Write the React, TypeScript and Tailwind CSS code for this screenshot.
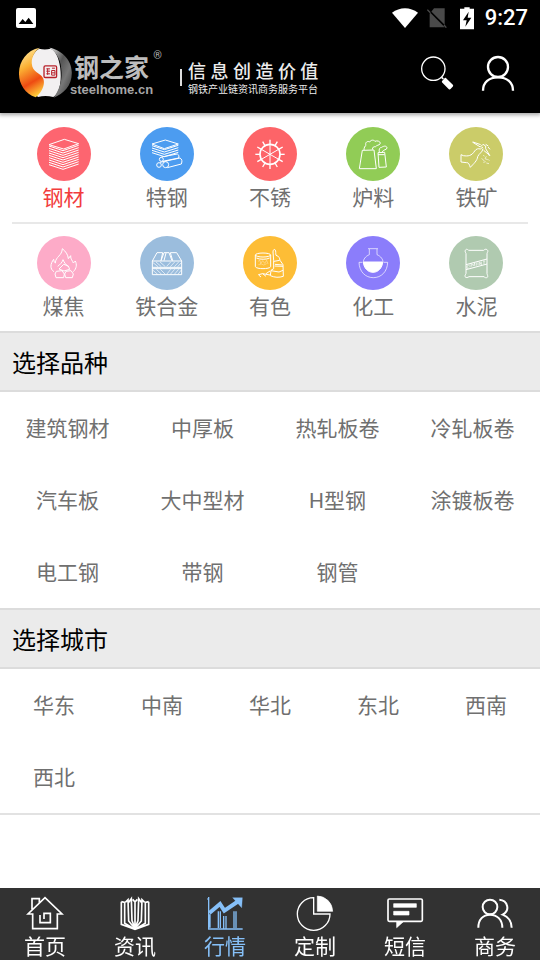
import type { ReactNode } from "react";
import { useState } from "react";

const LAYERS_TALL = [0, 7, 14, 21, 28, 35, 42, 49, 56];
const LAYERS_SHORT = [0, 7, 14, 21];
const SPOKES = [0, 30, 60, 90, 120, 150, 180, 210, 240, 270, 300, 330];

type Category = { name: string; color: string; art: ReactNode };

const categories: Category[] = [
  {
    name: "钢材",
    color: "bg-[#fd6570]",
    art: (
      <>
        <path d="M36 53 82 37l43 13-45 16Z" />
        {LAYERS_TALL.map((y) => (
          <path key={y} d={`M36 ${y + 57}l42 14 47-16`} />
        ))}
      </>
    ),
  },
  {
    name: "特钢",
    color: "bg-[#4c9cf0]",
    art: (
      <>
        <path d="M36 51 76 39l39 12-42 14Z" />
        {LAYERS_SHORT.map((y) => (
          <path key={y} d={`M36 ${y + 56}l37 12 42-13`} />
        ))}
        <path d="M64 90l48-9q8 4 4 12l-48 10M74 103l46-10q9 5 4 18l-42 11M60 106l14-3" />
        <circle cx="64" cy="97" r="6" />
        <circle cx="57" cy="114" r="7" />
        <circle cx="77" cy="113" r="9" />
      </>
    ),
  },
  {
    name: "不锈",
    color: "bg-[#fd6468]",
    art: (
      <>
        <circle cx="81" cy="82" r="30" strokeWidth="5" />
        {SPOKES.map((angle) => (
          <path key={angle} d="M81 52V38" strokeWidth="4" transform={`rotate(${angle} 81 82)`} />
        ))}
        <path d="M81 52v60M55 67l52 30M55 97l52-30" />
      </>
    ),
  },
  {
    name: "炉料",
    color: "bg-[#91cc56]",
    art: (
      <>
        <path d="M49 70 40 125h51l-7-56M49 70l35-1M96 77l3 44 22-1-5-44ZM96 83h20" />
        <path d="M54 69c0-8 3-12 6-14-4-9 5-14 11-10 4-8 14-6 16-2 8-4 19 2 15 8-3 4-10 3-13 8-7 0-9 1-10 9M100 75c-2-8 1-14 7-14 8-6 16-4 16 2-1 7-11 3-15 13" />
      </>
    ),
  },
  {
    name: "铁矿",
    color: "bg-[#cbcc69]",
    art: (
      <>
        <path d="M36 83l7 3c14 2 25 1 34-14 5-7 11-8 17-6l8-6M102 65c-2 12-12 14-16 24-1 12-13 22-22 32-4-9-4-15-12-14l-16-2V83" />
        <path d="M70 45l24 15 8-8 8 5v8l13 22M72 45l23 8M104 70l18 15M110 52l8 5M117 60l6 7" />
        <path d="M103 84l3 4M112 88l-4 7 8 3M117 97l4 4M98 94l8 8M103 106l7-2M112 108l8 2M119 79v6" strokeWidth="2" />
      </>
    ),
  },
  {
    name: "煤焦",
    color: "bg-[#fdabc8]",
    art: (
      <>
        <path d="M51 107C38 99 40 83 50 70c1 7 2 9 5 11 1-20 20-21 21-43 10 8 17 18 18 30l7-9c-1 11 6 15 8 22l6-6c5 11 4 22-6 32" />
        <path d="M62 91c7-5 14-12 16-20 4 10 10 16 15 20M66 99l14-14 14 5 4 10-17 5ZM58 106l17-2 7 10-2 11H57l-3-11ZM87 106l15-2 7 10-3 11H86l-3-11Z" />
      </>
    ),
  },
  {
    name: "铁合金",
    color: "bg-[#9bbddd]",
    art: (
      <>
        <path d="M37 75h88v41H37ZM37 94h88M37 98h88M37 75l14-25h17l-5 24M63 74l9-24h15l9 24M78 51l-6 23M91 50h19l15 25M91 50l7 24" />
        <path d="M38 79l16 13M48 78l16 14M60 78l16 14M80 91l12-13M91 92l13-14M103 92l13-14M113 92l11-12M38 102l15 13M49 100l16 15M61 100l15 15M80 115l12-15M91 115l13-15M103 115l13-15M114 115l10-13" strokeWidth="2" />
      </>
    ),
  },
  {
    name: "有色",
    color: "bg-[#fdbd36]",
    art: (
      <>
        <ellipse cx="60" cy="57" rx="23" ry="6" />
        <path d="M37 57v35c3 8 43 8 46 0V57M40 66c10 5 31 5 40 0" />
        <path d="M45 76l6-3 2 10 6-9 6 8 6-9 4 11M46 86l9-2 7 3 9-4" strokeWidth="1" />
        <path d="M92 73l-2-25c0-6 3-9 6-7 4 5 1 11 3 17 9 2 11 9 12 15l9 13 1 35c-13 4-25 4-39-2l2-16 8-5ZM93 76l17-3M96 85l23 2M95 90l25 1M84 104l24 4 12-5M46 116l13-3 22 4M59 113l10 8M47 117l7 6M69 113l12-8" />
      </>
    ),
  },
  {
    name: "化工",
    color: "bg-[#8b7dfb]",
    art: (
      <>
        <path d="M66 38h30M70 39v17c-12 5-18 14-18 23M93 39v17c12 5 18 14 18 23" strokeWidth="2" />
        <path d="M52 78h58c-1 17-13 31-29 31S53 95 52 78Z" fill="white" />
        <path d="M49 79H39c1 28 19 46 43 46s42-18 43-46h-12" strokeWidth="2" />
      </>
    ),
  },
  {
    name: "水泥",
    color: "bg-[#b0cab0]",
    art: (
      <>
        <path d="M49 43c3-6 8-2 10 0h45c4-4 9-5 12 0 2 5-2 6-2 10v60c1 5 4 7 1 11-4 3-8 0-10-2H60c-4 3-9 4-12 0-1-4 2-6 3-10V53c-1-4-4-6-2-10ZM51 86l63-17M51 101l63-17" />
        <path d="M59 88l-5 2v7l5-1M63 94v-9M68 92v-9l5 6 4-8v9M82 80v9M87 88v-9M92 87v-9l5 8v-9M102 75h7M105 75v9" strokeWidth="2" />
      </>
    ),
  },
];

const products = [
  "建筑钢材", "中厚板", "热轧板卷", "冷轧板卷",
  "汽车板", "大中型材", "H型钢", "涂镀板卷",
  "电工钢", "带钢", "钢管",
];

const cities = ["华东", "中南", "华北", "东北", "西南", "西北"];

const tabs: { name: string; art: ReactNode }[] = [
  {
    name: "首页",
    art: (
      <path d="M20 57H6L57 8l51 49H94v44H20ZM18 43V11h22v13M42 60v23h31V55H54v17" strokeWidth="5" />
    ),
  },
  {
    name: "资讯",
    art: (
      <>
        <path d="M16 20v68l41 15 41-15V20M16 20l10 2v63l31 18M98 20l-10 2v63l-31 18" strokeWidth="5" />
        <path d="M28 22l8-8 2 64 19 23M37 23l9-12 2 66 9 23M50 13l7 8v81M86 22l-8-8-2 64-19 23M77 23l-9-12-2 66-9 23M64 13l-7 8" strokeWidth="5" />
      </>
    ),
  },
  {
    name: "行情",
    art: (
      <>
        <path d="M8 6v96h102M4 12h6M12 58v40M37 49v50M43 49v50M53 63v37M60 63v37M84 49v50M90 49v50" strokeWidth="4" />
        <path d="M10 54l32-27 13 20 43-29" strokeWidth="12" />
        <path d="M80 8h29l-2 30Z" fill="currentColor" strokeWidth="1" />
      </>
    ),
  },
  {
    name: "定制",
    art: (
      <>
        <path d="M53 8a49 49 0 1 0 49 49H53Z" strokeWidth="4" />
        <path d="M64 3a47 47 0 0 1 46 46H64Z" fill="currentColor" strokeWidth="2" />
      </>
    ),
  },
  {
    name: "短信",
    art: (
      <>
        <rect x="6" y="12" width="103" height="67" rx="4" strokeWidth="5" />
        <path d="M32 80v18l20-18ZM23 26h68v11H23ZM23 49h46v11H23Z" fill="currentColor" strokeWidth="2" />
      </>
    ),
  },
  {
    name: "商务",
    art: (
      <>
        <circle cx="42" cy="36" r="22" strokeWidth="6" />
        <path d="M7 98c0-24 14-39 35-39s37 15 37 39M70 14c26 2 33 33 10 45 16 6 27 21 27 39" strokeWidth="6" />
      </>
    ),
  },
];

function StatusBar() {
  return (
    <div className="flex h-9 items-center pr-3 pl-4 text-white">
      <svg className="size-5" viewBox="0 0 60 60" aria-hidden="true">
        <rect width="60" height="60" rx="6" fill="white" />
        <path d="M8 48 20 33l8 9 10-13 14 19Z" fill="black" />
      </svg>
      <div className="ml-auto flex items-center">
        <svg className="h-5 w-7" viewBox="0 0 84 60" aria-hidden="true">
          <path d="M3 14C26-4 58-4 81 14L42 60Z" fill="white" />
        </svg>
        <svg className="ml-2 h-5 w-5" viewBox="0 0 60 60" aria-hidden="true">
          <path d="M21 1h32v57H8V17Z" fill="#4a4a4a" />
          <path d="M2 3l56 56" stroke="black" strokeWidth="5" />
          <path d="M1 5l9 9M51 51l7 8" stroke="#4a4a4a" strokeWidth="4" />
        </svg>
        <svg className="ml-3 h-6 w-4" viewBox="0 0 48 72" aria-hidden="true">
          <path d="M16 4h16v4h13v62H3V8h13Z" fill="white" />
          <path d="M29 17 12 43h11l-4 19 18-27H26Z" fill="black" />
        </svg>
        <span className="ml-2.5 text-[22px] leading-6 font-medium">9:27</span>
      </div>
    </div>
  );
}

function Emblem() {
  return (
    <svg className="h-[51px] w-[53px]" viewBox="0 0 159 154" aria-hidden="true">
      <defs>
        <linearGradient id="flame" x1="0.3" y1="0" x2="0.6" y2="1">
          <stop offset="0" stopColor="#ffe9a0" />
          <stop offset="0.35" stopColor="#fbb033" />
          <stop offset="0.7" stopColor="#ee4a12" />
          <stop offset="1" stopColor="#ffcf3a" />
        </linearGradient>
        <linearGradient id="steel" x1="0" y1="0" x2="1" y2="1">
          <stop offset="0" stopColor="#eeeeee" />
          <stop offset="0.4" stopColor="#555555" />
          <stop offset="0.65" stopColor="#777777" />
          <stop offset="1" stopColor="#333333" />
        </linearGradient>
      </defs>
      <path d="M60 5Q78 10 95 5c34 10 44 128 8 146q-24-6-46 0C20 120 20 30 60 5Z" fill="#f2f0f1" />
      <path d="M62 2C-14 16-24 126 50 152c20-16 31-44 21-60-9-14-31-15-33-42C37 32 46 13 62 2Z" fill="url(#flame)" />
      <path d="M91 2c27 4 68 30 68 76 0 40-25 64-55 75 16-22 25-47 24-76-1-36-13-61-37-75Z" fill="url(#steel)" />
      <g fill="none" stroke="#b8202a" strokeWidth="4">
        <rect x="75" y="57" width="38" height="35" rx="4" />
        <path d="M82 66h11M82 73h11M82 81h11M86 65v19M99 64h9M98 71h10v14H98ZM98 78h10" strokeWidth="3" />
      </g>
    </svg>
  );
}

function Header() {
  return (
    <header className="flex h-[77px] items-center pr-6 pb-1 pl-[19px]">
      <Emblem />
      <div className="relative mt-2 -ml-[2px] w-[84px]">
        <div className="pl-1 text-[25px] leading-[26px] font-bold text-[#bdbdbd]">钢之家</div>
        <div className="font-['Liberation_Sans',sans-serif] text-[13px] leading-4 font-bold text-[#a6a6a6]">
          steelhome.cn
        </div>
        <span className="absolute -top-2 -right-2 text-[11px] leading-4 text-[#b0b0b0]">®</span>
      </div>
      <div className="mt-2.5 ml-[26px] h-[17px] w-[2px] bg-[#dddddd]" />
      <div className="mt-3 ml-1.5 whitespace-nowrap text-[#ececec]">
        <div className="text-[18px] leading-[22px] font-medium">信 息 创 造 价 值</div>
        <div className="text-[10px] leading-[14px]">钢铁产业链资讯商务服务平台</div>
      </div>
      <div className="ml-auto flex gap-6">
        <button type="button" aria-label="搜索">
          <svg className="size-9" viewBox="0 0 108 108" fill="none" stroke="white" aria-hidden="true">
            <circle cx="40" cy="41" r="35" strokeWidth="4" />
            <path d="M65 67l5 5" strokeWidth="5" />
            <path d="M76 72l20 20-7 8-20-20Z" fill="white" strokeWidth="7" strokeLinejoin="round" />
          </svg>
        </button>
        <button type="button" aria-label="我的">
          <svg className="size-9" viewBox="0 0 108 108" fill="none" stroke="white" strokeWidth="7" aria-hidden="true">
            <circle cx="54" cy="36" r="30" />
            <path d="M9 107c0-25 18-40 45-40s45 15 45 40" />
          </svg>
        </button>
      </div>
    </header>
  );
}

function CategoryRow({ items, active, onPick }: { items: Category[]; active: string; onPick: (name: string) => void }) {
  return (
    <div className="grid grid-cols-5 pt-3 pb-[7px]">
      {items.map((item) => (
        <button key={item.name} type="button" onClick={() => onPick(item.name)} className="flex flex-col items-center">
          <span className={`size-[54px] rounded-full ${item.color}`}>
            <svg className="size-full" viewBox="0 0 162 162" fill="none" stroke="white" strokeWidth="3" strokeLinejoin="round" aria-hidden="true">
              {item.art}
            </svg>
          </span>
          <span className={`text-[21px] leading-[34px] ${item.name === active ? "text-[#f23c3c]" : "text-[#707070]"}`}>
            {item.name}
          </span>
        </button>
      ))}
    </div>
  );
}

function Picker({ title, items, columns }: { title: string; items: string[]; columns: string }) {
  return (
    <section>
      <h2 className="flex h-[61px] items-center border-y-2 border-[#dcdcdc] bg-[#ebebeb] px-3 pt-1 text-2xl text-black">
        {title}
      </h2>
      <div className={`grid ${columns}`}>
        {items.map((item) => (
          <button key={item} type="button" className="h-[72px] pt-1 text-[21px] text-[#707070]">
            {item}
          </button>
        ))}
      </div>
    </section>
  );
}

export default function App() {
  const [category, setCategory] = useState("钢材");
  const [tab, setTab] = useState("行情");

  return (
    <div className="flex min-h-screen flex-col bg-white font-[Roboto,'Noto_Sans_CJK_SC',sans-serif]">
      <div className="bg-black shadow-[0_1px_4px_1px_rgba(0,0,0,0.35)]">
        <StatusBar />
        <Header />
      </div>
      <main className="flex-1">
        <div className="px-3">
          <div className="border-b-2 border-[#e8e8e8] pt-[2px]">
            <CategoryRow items={categories.slice(0, 5)} active={category} onPick={setCategory} />
          </div>
          <CategoryRow items={categories.slice(5)} active={category} onPick={setCategory} />
        </div>
        <Picker title="选择品种" items={products} columns="grid-cols-4" />
        <Picker title="选择城市" items={cities} columns="grid-cols-5" />
        <div className="h-[2px] bg-[#e2e2e2]" />
      </main>
      <nav className="sticky bottom-0 grid h-[72px] grid-cols-6 bg-[#323232]">
        {tabs.map((item) => (
          <a
            key={item.name}
            href="#"
            onClick={() => setTab(item.name)}
            className={`flex flex-col items-center pt-[7px] ${item.name === tab ? "text-[#86c0f8]" : "text-white"}`}
          >
            <svg className="h-9 w-[38px]" viewBox="0 0 114 108" fill="none" stroke="currentColor" aria-hidden="true">
              {item.art}
            </svg>
            <span className="text-[21px] leading-8">{item.name}</span>
          </a>
        ))}
      </nav>
    </div>
  );
}
